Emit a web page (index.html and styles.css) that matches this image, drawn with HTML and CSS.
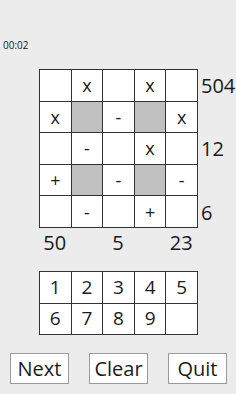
FILE: index.html
```html
<!DOCTYPE html>
<html lang="en">
<head>
    <meta charset="UTF-8">
    <meta name="viewport" content="width=device-width, initial-scale=1.0">
    <title>Math Grid</title>
    <link rel="stylesheet" href="styles.css">
</head>
<body>
    <div class="timer">00:02</div>

    <div class="puzzle">
        <div class="board">
            <div class="cell"></div><div class="cell">x</div><div class="cell"></div><div class="cell">x</div><div class="cell"></div>
            <div class="cell">x</div><div class="cell shade"></div><div class="cell">-</div><div class="cell shade"></div><div class="cell">x</div>
            <div class="cell"></div><div class="cell">-</div><div class="cell"></div><div class="cell">x</div><div class="cell"></div>
            <div class="cell">+</div><div class="cell shade"></div><div class="cell">-</div><div class="cell shade"></div><div class="cell">-</div>
            <div class="cell"></div><div class="cell">-</div><div class="cell"></div><div class="cell">+</div><div class="cell"></div>
        </div>
        <div class="row-sums">
            <div class="sum">504</div>
            <div class="sum"></div>
            <div class="sum">12</div>
            <div class="sum"></div>
            <div class="sum">6</div>
        </div>
    </div>

    <div class="col-sums">
        <div class="sum">50</div>
        <div class="sum"></div>
        <div class="sum">5</div>
        <div class="sum"></div>
        <div class="sum">23</div>
    </div>

    <div class="board numpad">
        <div class="cell key">1</div><div class="cell key">2</div><div class="cell key">3</div><div class="cell key">4</div><div class="cell key">5</div>
        <div class="cell key">6</div><div class="cell key">7</div><div class="cell key">8</div><div class="cell key">9</div><div class="cell key"></div>
    </div>

    <div class="actions">
        <button class="btn">Next</button>
        <button class="btn">Clear</button>
        <button class="btn">Quit</button>
    </div>
</body>
</html>
```

FILE: styles.css
```css
body {
    margin: 0;
    padding: 0;
    background-color: #ececec;
    font-family: "Open Sans", "Noto Sans", sans-serif;
    color: #1a1a1a;
}

.timer {
    padding: 38px 0 0 3px;
    font-size: 10px;
    line-height: 14px;
    height: 14px;
}

.puzzle {
    display: flex;
    margin: 17px 0 0 39px;
}

.board {
    display: grid;
    grid-template-columns: repeat(5, 30.6px);
    grid-auto-rows: 30.6px;
    gap: 1px;
    padding: 1px;
    background-color: #333;
    width: max-content;
}

.cell {
    background-color: #fff;
    display: flex;
    justify-content: center;
    align-items: center;
    font-size: 18px;
    line-height: 1;
}

.cell.shade {
    background-color: #c0c0c0;
}

.row-sums {
    display: grid;
    grid-template-rows: repeat(5, 31.6px);
    padding: 1px 0 0 3px;
}

.row-sums .sum {
    display: flex;
    align-items: center;
    font-size: 20px;
}

.col-sums {
    display: grid;
    grid-template-columns: repeat(5, 31.6px);
    margin: 3px 0 0 39px;
    font-size: 20px;
    line-height: 24px;
}

.col-sums .sum {
    text-align: center;
}

.numpad {
    margin: 16px 0 0 39px;
}

.key {
    font-size: 19px;
}

.actions {
    display: flex;
    gap: 20px;
    margin-top: 18px;
    padding-left: 10px;
}

.btn {
    width: 59px;
    height: 31px;
    padding: 0;
    background-color: #fff;
    border: 1px solid #9a9a9a;
    font-family: "Open Sans", "Noto Sans", sans-serif;
    font-size: 20px;
    color: #1a1a1a;
}
```
